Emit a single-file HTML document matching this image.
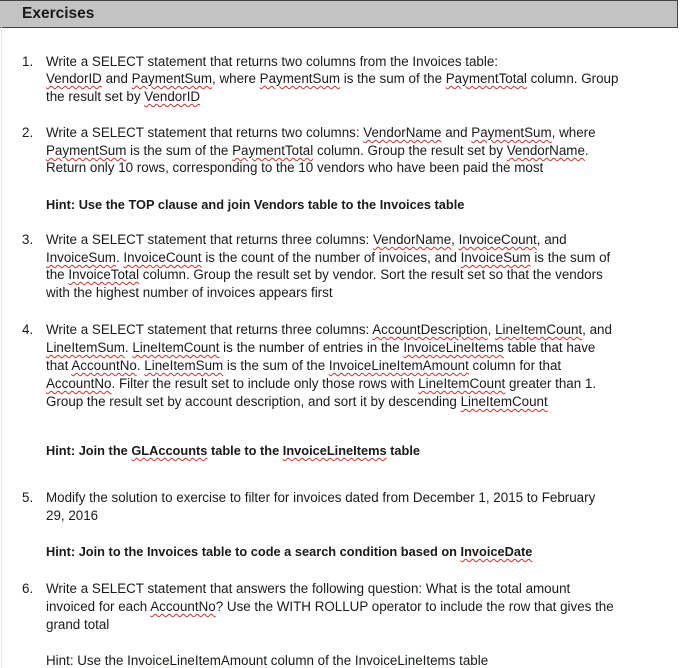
<!DOCTYPE html>
<html><head><meta charset="utf-8"><style>
html,body{margin:0;padding:0;background:#fff;width:681px;height:668px;overflow:hidden;position:relative;font-family:"Liberation Sans",sans-serif;color:#1a1a1a}
.hd{position:absolute;left:0;top:0;width:677px;height:26px;background:#c3c3c3;border:1px solid #444;border-left:none}
.hd span{position:absolute;left:22px;top:4px;font-weight:bold;font-size:15.5px}
.l{position:absolute;left:46px;font-size:13.4px;white-space:nowrap;line-height:16px}
.n{position:absolute;left:22px;font-size:13.4px;line-height:16px}
.b{font-weight:bold;font-size:12.8px}
u{text-decoration:underline wavy #d03030;text-decoration-thickness:1px;text-underline-offset:2px}
.edge{position:absolute;left:1px;top:27px;width:1px;height:641px;background:#e6e6e6}
</style></head><body>
<div class="hd"><span>Exercises</span></div>
<div class="edge"></div>

<div class="n" style="top:54px">1.</div>
<div class="l" style="top:54px">Write a SELECT statement that returns two columns from the Invoices table:</div>
<div class="l" style="top:71px"><u>VendorID</u> and <u>PaymentSum</u>, where <u>PaymentSum</u> is the sum of the <u>PaymentTotal</u> column. Group</div>
<div class="l" style="top:89px">the result set by <u>VendorID</u></div>

<div class="n" style="top:125px">2.</div>
<div class="l" style="top:125px">Write a SELECT statement that returns two columns: <u>VendorName</u> and <u>PaymentSum</u>, where</div>
<div class="l" style="top:143px"><u>PaymentSum</u> is the sum of the <u>PaymentTotal</u> column. Group the result set by <u>VendorName</u>.</div>
<div class="l" style="top:160px">Return only 10 rows, corresponding to the 10 vendors who have been paid the most</div>
<div class="l b" style="top:197px">Hint: Use the TOP clause and join Vendors table to the Invoices table</div>

<div class="n" style="top:232px">3.</div>
<div class="l" style="top:232px">Write a SELECT statement that returns three columns: <u>VendorName</u>, <u>InvoiceCount</u>, and</div>
<div class="l" style="top:250px"><u>InvoiceSum</u>. <u>InvoiceCount</u> is the count of the number of invoices, and <u>InvoiceSum</u> is the sum of</div>
<div class="l" style="top:267px">the <u>InvoiceTotal</u> column. Group the result set by vendor. Sort the result set so that the vendors</div>
<div class="l" style="top:285px">with the highest number of invoices appears first</div>

<div class="n" style="top:322px">4.</div>
<div class="l" style="top:322px">Write a SELECT statement that returns three columns: <u>AccountDescription</u>, <u>LineItemCount</u>, and</div>
<div class="l" style="top:340px"><u>LineItemSum</u>. <u>LineItemCount</u> is the number of entries in the <u>InvoiceLineItems</u> table that have</div>
<div class="l" style="top:358px">that <u>AccountNo</u>. <u>LineItemSum</u> is the sum of the <u>InvoiceLineItemAmount</u> column for that</div>
<div class="l" style="top:376px"><u>AccountNo</u>. Filter the result set to include only those rows with <u>LineItemCount</u> greater than 1.</div>
<div class="l" style="top:394px">Group the result set by account description, and sort it by descending <u>LineItemCount</u></div>
<div class="l b" style="top:443px">Hint: Join the <u>GLAccounts</u> table to the <u>InvoiceLineItems</u> table</div>

<div class="n" style="top:490px">5.</div>
<div class="l" style="top:490px">Modify the solution to exercise to filter for invoices dated from December 1, 2015 to February</div>
<div class="l" style="top:508px">29, 2016</div>
<div class="l b" style="top:544px">Hint: Join to the Invoices table to code a search condition based on <u>InvoiceDate</u></div>

<div class="n" style="top:581px">6.</div>
<div class="l" style="top:581px">Write a SELECT statement that answers the following question: What is the total amount</div>
<div class="l" style="top:599px">invoiced for each <u>AccountNo</u>? Use the WITH ROLLUP operator to include the row that gives the</div>
<div class="l" style="top:617px">grand total</div>
<div class="l" style="top:653px">Hint: Use the <u>InvoiceLineItemAmount</u> column of the <u>InvoiceLineItems</u> table</div>
</body></html>
